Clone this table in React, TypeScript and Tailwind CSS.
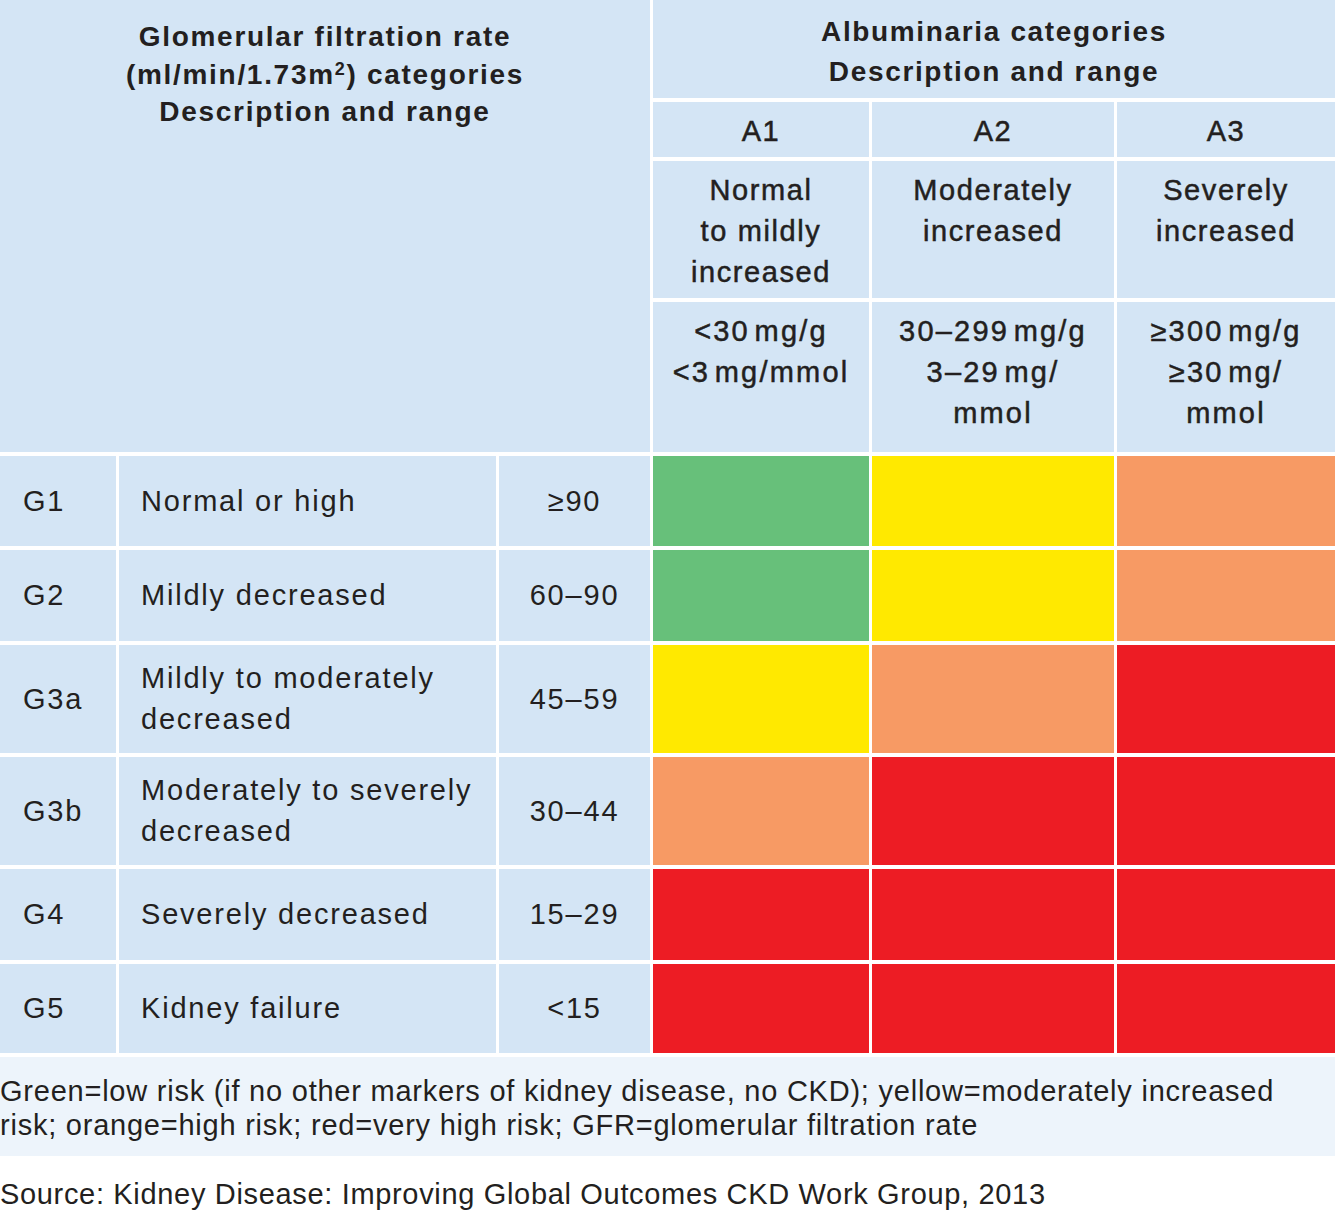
const GREEN = "bg-[#67c07a]"
const YELLOW = "bg-[#ffe900]"
const ORANGE = "bg-[#f79a64]"
const RED = "bg-[#ed1c24]"

const albumin = [
  { code: "A1", desc: ["Normal", "to mildly", "increased"], range: ["<30\u200Amg/g", "<3\u200Amg/mmol"] },
  { code: "A2", desc: ["Moderately", "increased"], range: ["30–299\u200Amg/g", "3–29\u200Amg/", "mmol"] },
  { code: "A3", desc: ["Severely", "increased"], range: ["≥300\u200Amg/g", "≥30\u200Amg/", "mmol"] },
]

const gfr = [
  { g: "G1", desc: ["Normal or high"], range: "≥90", risk: [GREEN, YELLOW, ORANGE] },
  { g: "G2", desc: ["Mildly decreased"], range: "60–90", risk: [GREEN, YELLOW, ORANGE] },
  { g: "G3a", desc: ["Mildly to moderately", "decreased"], range: "45–59", risk: [YELLOW, ORANGE, RED] },
  { g: "G3b", desc: ["Moderately to severely", "decreased"], range: "30–44", risk: [ORANGE, RED, RED] },
  { g: "G4", desc: ["Severely decreased"], range: "15–29", risk: [RED, RED, RED] },
  { g: "G5", desc: ["Kidney failure"], range: "<15", risk: [RED, RED, RED] },
]

const medium = "text-[29px] leading-[41px] tracking-[1.6px] [-webkit-text-stroke:0.5px_#231f20]"
const body = "text-[29px] leading-[41px] tracking-[1.8px]"

export default function App() {
  return (
    <div className="w-[1335px] bg-white text-[#231f20] font-['Liberation_Sans',Arial,sans-serif]">
      <div className="grid grid-cols-[116px_377px_151px_216px_242px_1fr] grid-rows-[98px_55px_137px_150px_90px_91px_108px_108px_91px_89px] gap-x-[3px] gap-y-[4px]">
        {/* left header */}
        <div className="col-span-3 row-span-4 bg-[#d4e5f5] pt-[18px] text-center text-[28px] font-bold leading-[37.5px] tracking-[1.7px]">
          <div>Glomerular filtration rate</div>
          <div>
            (ml/min/1.73m<sup className="text-[18px] leading-none">2</sup>) categories
          </div>
          <div>Description and range</div>
        </div>

        {/* right header */}
        <div className="col-span-3 bg-[#d4e5f5] pt-[12px] text-center text-[28px] font-bold leading-[40px] tracking-[1.65px]">
          <div>Albuminaria categories</div>
          <div>Description and range</div>
        </div>

        {albumin.map((a) => (
          <div key={a.code} className={`bg-[#d4e5f5] pt-[9px] text-center ${medium}`}>
            {a.code}
          </div>
        ))}
        {albumin.map((a) => (
          <div key={a.code + "d"} className={`bg-[#d4e5f5] pt-[9px] text-center ${medium}`}>
            {a.desc.map((l) => (
              <div key={l}>{l}</div>
            ))}
          </div>
        ))}
        {albumin.map((a) => (
          <div key={a.code + "r"} className="bg-[#d4e5f5] pt-[9px] text-center text-[29px] leading-[41px] tracking-[2.2px] [-webkit-text-stroke:0.5px_#231f20]">
            {a.range.map((l) => (
              <div key={l}>{l}</div>
            ))}
          </div>
        ))}

        {gfr.map((row) => (
          <div key={row.g} className="contents">
            <div className={`flex items-center bg-[#d4e5f5] pl-[23px] ${body}`}>{row.g}</div>
            <div className={`flex flex-col justify-center bg-[#d4e5f5] pl-[22px] ${body}`}>
              {row.desc.map((l) => (
                <div key={l}>{l}</div>
              ))}
            </div>
            <div className={`flex items-center justify-center bg-[#d4e5f5] ${body}`}>{row.range}</div>
            {row.risk.map((c, i) => (
              <div key={i} className={c}></div>
            ))}
          </div>
        ))}
      </div>

      <div className="mt-[4px] bg-[#edf4fb] pt-[17px] pb-[14px] text-[29px] leading-[34px] tracking-[0.77px]">
        Green=low risk (if no other markers of kidney disease, no CKD); yellow=moderately increased
        <br />
        risk; orange=high risk; red=very high risk; GFR=glomerular filtration rate
      </div>

      <div className="mt-[21px] text-[29px] leading-[34px] tracking-[0.67px]">
        Source: Kidney Disease: Improving Global Outcomes CKD Work Group, 2013
      </div>
    </div>
  )
}
